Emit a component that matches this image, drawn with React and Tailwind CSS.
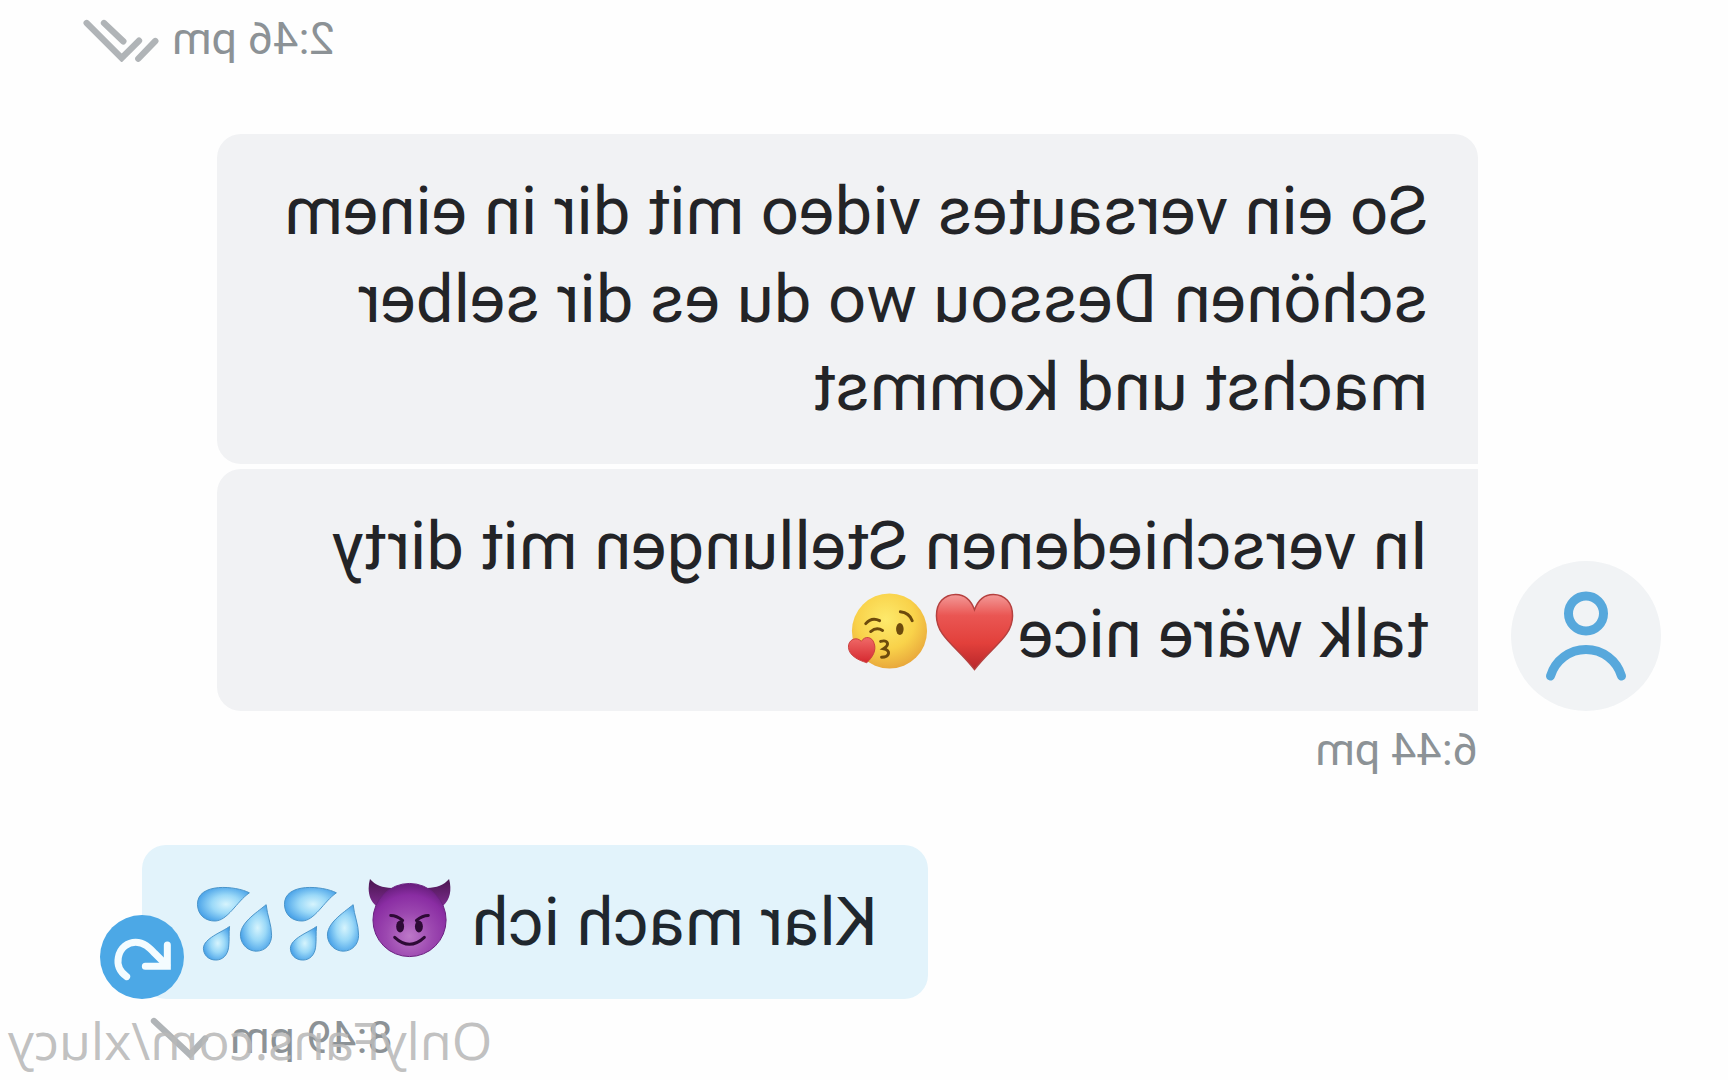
function DoubleCheck() {
  return (
    <svg viewBox="0 55 240 135" className="h-[45px] w-20" fill="none" stroke="#b0b4b7" strokeWidth="19" strokeLinecap="round" role="img" aria-label="Read">
      <path d="M220 73 115 178 63 126" />
      <path d="M168 73 110 128" />
      <path d="M65 180 14 127" />
    </svg>
  );
}

function SingleCheck() {
  return (
    <svg viewBox="-24 85 228 126" className="h-[42px] w-[76px]" fill="none" stroke="#b0b4b7" strokeWidth="19" strokeLinecap="round" role="img" aria-label="Sent">
      <path d="M168 97 60 198 15 150" />
    </svg>
  );
}

function Emoji({ label, children }) {
  return (
    <svg viewBox="0 0 88 88" className="inline-block size-[87px] align-top" role="img" aria-label={label}>
      {children}
    </svg>
  );
}

function Heart() {
  return (
    <Emoji label="❤️">
      <defs>
        <linearGradient id="heartFill" x1="0" y1="0" x2="0" y2="1">
          <stop offset="0" stopColor="#f39a98" />
          <stop offset="0.28" stopColor="#ea5653" />
          <stop offset="0.65" stopColor="#e2403b" />
          <stop offset="1" stopColor="#b8262a" />
        </linearGradient>
      </defs>
      <path
        d="M44 20C48 9 55 4.500 63 4.500 75 4.500 82.500 13 82.500 26 82.500 47 62 57 44 80.500 26 57 5.500 47 5.500 26 5.500 13 13 4.500 25 4.500 33 4.500 40 9 44 20Z"
        fill="url(#heartFill)"
        stroke="#b5413f"
        strokeWidth="1.500"
      />
    </Emoji>
  );
}

function Kiss() {
  return (
    <Emoji label="😘">
      <defs>
        <radialGradient id="kissFill" cx="0.55" cy="0.35" r="0.65">
          <stop offset="0" stopColor="#fdea6c" />
          <stop offset="0.6" stopColor="#f9d24a" />
          <stop offset="1" stopColor="#e9a93c" />
        </radialGradient>
        <linearGradient id="kissHeart" x1="0" y1="0" x2="0" y2="1">
          <stop offset="0" stopColor="#f06a68" />
          <stop offset="1" stopColor="#d5282f" />
        </linearGradient>
      </defs>
      <circle cx="42" cy="41.500" r="38" fill="url(#kissFill)" />
      <ellipse cx="31.500" cy="39.500" rx="3.800" ry="6" fill="#6d4a0c" />
      <g fill="none" stroke="#6d4a0c" strokeWidth="3" strokeLinecap="round">
        <path d="M31 22Q22 23 19 31" />
        <path d="M66 34Q60 27 52 31" />
        <path d="M61 42Q55 37 49 41" />
        <path d="M51 52C44 50 41 55 48 59.500 40 61 42 68 50 68" />
      </g>
      <path
        d="M65 73.500C59 68 55 61 57.500 54 59.500 47 67 46 70.500 52 75 46.500 84 50 83.500 58 83 66 74 71 65 73.500Z"
        fill="url(#kissHeart)"
        stroke="#c9413f"
      />
    </Emoji>
  );
}

function Devil() {
  return (
    <Emoji label="😈">
      <defs>
        <radialGradient id="devilFill" cx="0.5" cy="0.72" r="0.7">
          <stop offset="0" stopColor="#bd78c8" />
          <stop offset="0.45" stopColor="#9c48b0" />
          <stop offset="0.8" stopColor="#8a2da3" />
          <stop offset="1" stopColor="#6b1f80" />
        </radialGradient>
        <linearGradient id="hornFill" x1="0" y1="0" x2="0" y2="1">
          <stop offset="0" stopColor="#4a1650" />
          <stop offset="1" stopColor="#7b2a8c" />
        </linearGradient>
      </defs>
      <path d="M86 1C89 12 87 22 80 28L64 10C73 10 81 7 86 1Z" fill="url(#hornFill)" />
      <path d="M6 1C3 12 5 22 12 28L28 10C19 10 11 7 6 1Z" fill="url(#hornFill)" />
      <circle cx="46" cy="42.500" r="37" fill="url(#devilFill)" stroke="#6a2080" strokeWidth="1" />
      <ellipse cx="55.500" cy="49" rx="4" ry="6" fill="#2d0a35" />
      <ellipse cx="36.500" cy="49" rx="4" ry="6" fill="#2d0a35" />
      <g fill="none" stroke="#2d0a35" strokeWidth="3" strokeLinecap="round">
        <path d="M65 38Q59 38 53 43" />
        <path d="M27 38Q33 38 39 43" />
        <path d="M61 60Q46 74 31 60" />
      </g>
    </Emoji>
  );
}

function Drops() {
  return (
    <Emoji label="💦">
      <defs>
        <radialGradient id="dropFill" cx="0.45" cy="0.5" r="0.6">
          <stop offset="0" stopColor="#d6f4fd" />
          <stop offset="0.45" stopColor="#9bd9f8" />
          <stop offset="1" stopColor="#3f9be6" />
        </radialGradient>
      </defs>
      <g fill="url(#dropFill)" stroke="#4a94c8" strokeWidth="1" strokeLinejoin="round">
        <path d="M32 15C45 8 85 4 84.500 27 84 38 76 43.500 67 43.500 54 43.500 45 24 32 15Z" />
        <path d="M15 27C26 36 42 46 41 59 40 68 33 74 25 74 16 74 9.500 67 9.500 58 9.500 47 14 38 15 27Z" />
        <path d="M52 49C60 55 78 61 78.500 71 78.500 78 73 83 66 83 59 83 54 78 53 70 52 62 53 56 52 49Z" />
      </g>
    </Emoji>
  );
}

function Avatar() {
  return (
    <div className="size-[150px] shrink-0 rounded-full bg-[#f1f3f5]">
      <svg viewBox="0 0 150 150" className="size-full" fill="none" stroke="#57a8dc" strokeWidth="9" strokeLinecap="round" role="img" aria-label="User">
        <circle cx="75" cy="52.500" r="17.500" />
        <path d="M39.500 115A37 37 0 0 1 110.500 115" />
      </svg>
    </div>
  );
}

function Time({ children }) {
  return <time className="text-[45px] leading-[54px] text-[#8c9296]">{children}</time>;
}

export default function App() {
  return (
    <main className="relative min-h-screen -scale-x-100 overflow-hidden bg-[#fefefe] font-[Roboto,sans-serif] text-[67px] leading-[88px] text-[#232427]">
      <div className="flex items-center justify-end gap-3 pt-3 pr-20">
        <Time>2:46 pm</Time>
        <DoubleCheck />
      </div>

      <section className="mt-[68px] pr-[217px] pl-[67px]">
        <div className="flex items-end gap-[33px]">
          <Avatar />
          <div className="flex flex-1 flex-col gap-[5px]">
            <p className="rounded-r-3xl rounded-tl-3xl bg-[#f1f2f4] px-[50px] py-[33px]">
              So ein versautes video mit dir in einem schönen Dessou wo du es dir selber machst und kommst
            </p>
            <p className="rounded-r-3xl bg-[#f1f2f4] px-[50px] py-[33px]">
              In verschiedenen Stellungen mit dirty talk wäre nice
              <Heart />
              <Kiss />
            </p>
          </div>
        </div>
        <div className="flex pt-3 pl-[183px]">
          <Time>6:44 pm</Time>
        </div>
      </section>

      <section className="mt-[68px] flex flex-col items-end pr-[142px]">
        <div className="relative">
          <p className="rounded-3xl bg-[#e2f3fb] py-[33px] pr-[52px] pl-[50px] text-[#1f272e]">
            Klar mach ich <Devil />
            <Drops />
            <Drops />
          </p>
          <button type="button" aria-label="Reply" className="absolute -right-[42px] bottom-0 size-[84px] rounded-full bg-[#4ca8e6]">
            <svg viewBox="0 0 252 252" className="size-full" fill="none" stroke="#f4fcff" strokeWidth="21">
              <path d="M172 185C190 172 202 153 197 127 191 97 168 82 145 82 120 82 104 98 88 115L52 151" strokeLinecap="round" strokeLinejoin="round" />
              <path d="M50 90V154H116" strokeLinecap="round" />
            </svg>
          </button>
        </div>
        <div className="flex items-center gap-3 pt-3">
          <Time>8:49 pm</Time>
          <SingleCheck />
        </div>
      </section>

      <p className="absolute right-2 bottom-1 font-['Open_Sans',sans-serif] text-[52px] leading-[72px] text-[#b9b9b9]/90">
        OnlyFans.com/xlucy
      </p>
    </main>
  );
}
